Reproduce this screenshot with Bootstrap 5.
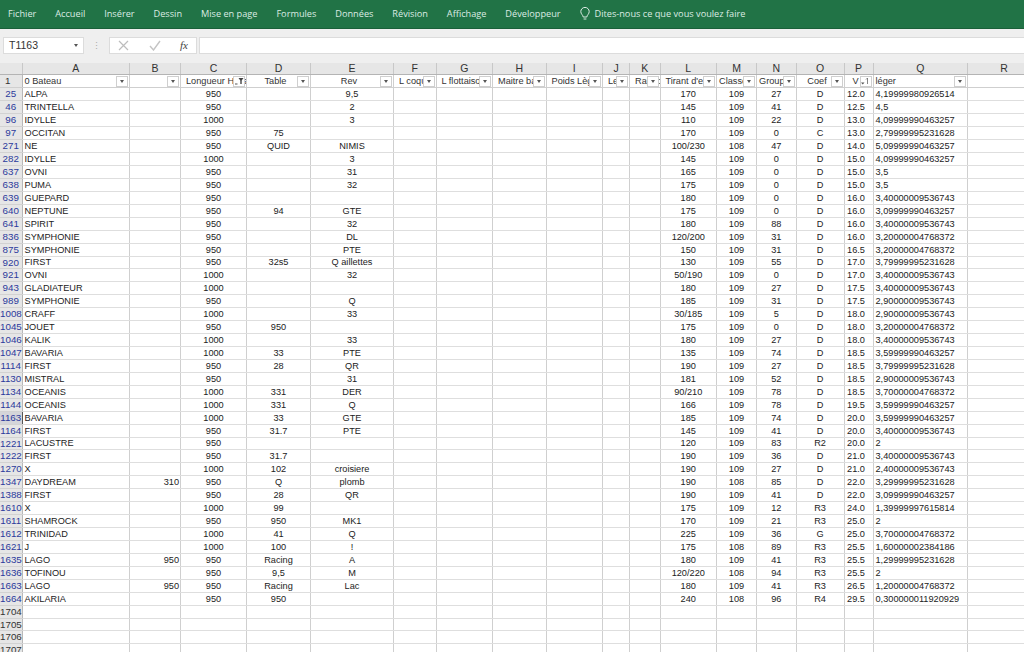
<!DOCTYPE html>
<html lang="fr">
<head>
<meta charset="utf-8">
<title>Classeur</title>
<link href="https://cdn.jsdelivr.net/npm/bootstrap@5.3.0/dist/css/bootstrap.min.css" rel="stylesheet">
<style>
html,body{height:100%;overflow:hidden;background:#fff}
body{font-family:"Liberation Sans",Arial,sans-serif;color:#222}
.tabbar{height:29px;background:#217346;border-bottom:1px solid #1a5f39;padding-left:8px;gap:18.9px;font-family:"Open Sans",sans-serif;font-size:9.2px;color:#dcebe3;white-space:nowrap}
.tabbar span{flex:none}
.tell{gap:3px;margin-left:1px}
.tell svg{margin-right:1px}
.fbar{height:34px;background:#efefef;padding:8px 0 9px 3px}
.namebox{width:81px;background:#fff;border:1px solid #dcdcdc;font-size:10.5px;color:#333;padding:0 5px}
.grip{width:25px;color:#aaa;font-size:9px;line-height:4px}
.fbtns{width:88px;background:#fff;border:1px solid #dcdcdc;padding:0 8px}
.fbtns svg{flex:none}
.fx{font-family:"Liberation Serif",serif;font-style:italic;font-size:11px;color:#444}
.finput{background:#fff;border:1px solid #dcdcdc;margin-left:2px;border-right:0}
.sheet{table-layout:fixed;width:1040px;border-collapse:collapse;margin:0;--bs-table-bg:transparent;--bs-table-color:#222}
.sheet col:nth-child(1){width:22px}.sheet col:nth-child(2){width:107.5px}.sheet col:nth-child(3){width:51px}.sheet col:nth-child(4){width:66px}.sheet col:nth-child(5){width:64px}.sheet col:nth-child(6){width:83px}.sheet col:nth-child(7){width:42.5px}.sheet col:nth-child(8){width:56.5px}.sheet col:nth-child(9){width:53.5px}.sheet col:nth-child(10){width:56.5px}.sheet col:nth-child(11){width:27px}.sheet col:nth-child(12){width:30.5px}.sheet col:nth-child(13){width:56.5px}.sheet col:nth-child(14){width:40px}.sheet col:nth-child(15){width:39.5px}.sheet col:nth-child(16){width:48px}.sheet col:nth-child(17){width:29px}.sheet col:nth-child(18){width:94.5px}.sheet col:nth-child(19){width:73px}
.sheet.table>:not(caption)>*>*{padding:0 1px;height:13px;line-height:12px;font-size:9.2px;font-weight:400;text-align:center;white-space:nowrap;overflow:hidden;border:0;border-right:1px solid #cfcfcf;border-bottom:1px solid #dedede;box-shadow:none;vertical-align:middle}
.sheet.table>tbody>tr:nth-child(14n)>*{height:12px;line-height:11px}
.sheet.table>thead>.letters>th{height:11px;line-height:10px;background:#e6e6e6;font-size:10.5px;color:#333;border-right:1px solid #c8c8c8;border-bottom:1px solid #b4b4b4}
.sheet.table>thead>.filters>th{height:13.5px;padding:0 2px 0 5px;position:relative;color:#333;border-bottom:1px solid #cfcfcf;text-align:left}
.sheet.table>thead>.filters>th.ctr{text-align:center;padding:0 8px 0 2px}
.sheet.table>thead>.filters>th.tight{padding-left:2px}
.sheet.table>*>*>th.rn{background:#e6e6e6;color:#2c3a9c;padding:0;border-right:1px solid #b8b8b8;border-bottom:1px solid #d2d2d2;font-size:9.8px}
.sheet.table>*>*>th.rn.plain{color:#333}
.sheet.table>*>*>th.rn.on{background:#d4d5da;color:#2c3a9c;border-right:1px solid #555}
.sheet.table>*>*>td.lt{text-align:left;padding-left:2px}
.sheet.table>*>*>td.rt{text-align:right;padding-right:1px}
.sheet.table>*>*>td.pv{padding-right:6px}
.sheet.table>*>*>.free{border-right-color:transparent}
.fbtn{position:absolute;right:1px;top:1px;width:12px;height:11px;background:#fff;border:1px solid #cfcfcf;display:flex;align-items:center;justify-content:center}
.tri{width:0;height:0;border-left:2.5px solid transparent;border-right:2.5px solid transparent;border-top:3px solid #555}
</style>
</head>
<body>
<div class="tabbar d-flex align-items-center">
<span>Fichier</span><span>Accueil</span><span>Insérer</span><span>Dessin</span><span>Mise en page</span><span>Formules</span><span>Données</span><span>Révision</span><span>Affichage</span><span>Développeur</span>
<span class="tell d-flex align-items-center"><svg width="10" height="14" viewBox="0 0 10 14" fill="none" stroke="#dcebe3" stroke-width="1"><path d="M3.2 10C3 8 .8 7 .8 4.6a4.2 4.2 0 0 1 8.4 0C9.200 7 7 8 6.800 10Z"/><path d="M3.600 12h2.800"/></svg>Dites-nous ce que vous voulez faire</span>
</div>
<div class="fbar d-flex">
<div class="namebox d-flex align-items-center justify-content-between"><span>T1163</span><span class="tri"></span></div>
<div class="grip d-flex align-items-center justify-content-center">⋮</div>
<div class="fbtns d-flex align-items-center justify-content-between">
<svg width="11" height="11" viewBox="0 0 11 11" stroke="#bdbdbd" stroke-width="1.200"><path d="M1 1l9 9M10 1l-9 9"/></svg>
<svg width="12" height="11" viewBox="0 0 12 11" fill="none" stroke="#c4c4c4" stroke-width="1.400"><path d="M1 6l3.500 4L11 1"/></svg>
<span class="fx">fx</span>
</div>
<div class="finput flex-grow-1"></div>
</div>
<table class="table sheet" id="sheet"><colgroup><col><col><col><col><col><col><col><col><col><col><col><col><col><col><col><col><col><col><col></colgroup><thead></thead><tbody></tbody></table>
<script src="https://cdn.jsdelivr.net/npm/bootstrap@5.3.0/dist/js/bootstrap.bundle.min.js"></script>
<script>
var rows=`25|ALPA||950||9,5|170|109|27|D|12.0|4,19999980926514
46|TRINTELLA||950||2|145|109|41|D|12.5|4,5
96|IDYLLE||1000||3|110|109|22|D|13.0|4,09999990463257
97|OCCITAN||950|75||170|109|0|C|13.0|2,79999995231628
271|NE||950|QUID|NIMIS|100/230|108|47|D|14.0|5,09999990463257
282|IDYLLE||1000||3|145|109|0|D|15.0|4,09999990463257
637|OVNI||950||31|165|109|0|D|15.0|3,5
638|PUMA||950||32|175|109|0|D|15.0|3,5
639|GUEPARD||950|||180|109|0|D|16.0|3,40000009536743
640|NEPTUNE||950|94|GTE|175|109|0|D|16.0|3,09999990463257
641|SPIRIT||950||32|180|109|88|D|16.0|3,40000009536743
836|SYMPHONIE||950||DL|120/200|109|31|D|16.0|3,20000004768372
875|SYMPHONIE||950||PTE|150|109|31|D|16.5|3,20000004768372
920|FIRST||950|32s5|Q aillettes|130|109|55|D|17.0|3,79999995231628
921|OVNI||1000||32|50/190|109|0|D|17.0|3,40000009536743
943|GLADIATEUR||1000|||180|109|27|D|17.5|3,40000009536743
989|SYMPHONIE||950||Q|185|109|31|D|17.5|2,90000009536743
1008|CRAFF||1000||33|30/185|109|5|D|18.0|2,90000009536743
1045|JOUET||950|950||175|109|0|D|18.0|3,20000004768372
1046|KALIK||1000||33|180|109|27|D|18.0|3,40000009536743
1047|BAVARIA||1000|33|PTE|135|109|74|D|18.5|3,59999990463257
1114|FIRST||950|28|QR|190|109|27|D|18.5|3,79999995231628
1130|MISTRAL||950||31|181|109|52|D|18.5|2,90000009536743
1134|OCEANIS||1000|331|DER|90/210|109|78|D|18.5|3,70000004768372
1144|OCEANIS||1000|331|Q|166|109|78|D|19.5|3,59999990463257
1163|BAVARIA||1000|33|GTE|185|109|74|D|20.0|3,59999990463257
1164|FIRST||950|31.7|PTE|145|109|41|D|20.0|3,40000009536743
1221|LACUSTRE||950|||120|109|83|R2|20.0|2
1222|FIRST||950|31.7||190|109|36|D|21.0|3,40000009536743
1270|X||1000|102|croisiere|190|109|27|D|21.0|2,40000009536743
1347|DAYDREAM|310|950|Q|plomb|190|108|85|D|22.0|3,29999995231628
1388|FIRST||950|28|QR|190|109|41|D|22.0|3,09999990463257
1610|X||1000|99||175|109|12|R3|24.0|1,39999997615814
1611|SHAMROCK||950|950|MK1|170|109|21|R3|25.0|2
1612|TRINIDAD||1000|41|Q|225|109|36|G|25.0|3,70000004768372
1621|J||1000|100|!|175|108|89|R3|25.5|1,60000002384186
1635|LAGO|950|950|Racing|A|180|109|41|R3|25.5|1,29999995231628
1636|TOFINOU||950|9,5|M|120/220|108|94|R3|25.5|2
1663|LAGO|950|950|Racing|Lac|180|109|41|R3|26.5|1,20000004768372
1664|AKILARIA||950|950||240|108|96|R4|29.5|0,300000011920929
1704|||||||||||
1705|||||||||||
1706|||||||||||
1707|||||||||||`.split('\n');
var t=document.getElementById('sheet');
var letters='ABCDEFGHIJKLMNOPQR'.split('');
var h='<tr class="letters"><th class="rn"></th>'+letters.map(function(l){return '<th>'+l+'</th>'}).join('')+'</tr>';
var tri='<span class="fbtn"><span class="tri"></span></span>';
var funnel='<span class="fbtn"><svg width="9" height="8" viewBox="0 0 9 8"><path d="M0 6.500h2.500v1H0z" fill="#555"/><path d="M3.500 1h5L6.700 3.500V7H5.300V3.500z" fill="#444"/></svg></span>';
var sortb='<span class="fbtn"><svg width="9" height="8" viewBox="0 0 9 8" fill="none"><path d="M0 5.500h3.500L1.750 7.500z" fill="#555"/><path d="M6.500 7V1M5 2.500L6.500 1" stroke="#666" stroke-width=".8"/></svg></span>';
var heads=[['0 Bateau','tight',tri],['','',tri],['Longueur Hors tout','',funnel],['Table','ctr',tri],['Rev','ctr',tri],['L coque','',tri],['L flottaison','',tri],['Maitre bau','',tri],['Poids Lège','',tri],['Lest','',tri],['Rapport','',tri],["Tirant d'eau",'',tri],['Classe','tight',tri],['Groupe','tight',tri],['Coef','ctr',tri],['V','ctr',sortb],['léger','tight',tri]];
h+='<tr class="filters"><th class="rn plain">1</th>'+heads.map(function(x){return '<th class="'+x[1]+'">'+x[0]+x[2]+'</th>'}).join('')+'<th class="free"></th></tr>';
t.tHead.innerHTML=h;
var b='';
rows.forEach(function(r){
 var c=r.split('|'),n=+c[0];
 var blank=n>=1704;
 var s='<tr><th class="rn'+(blank?' plain':'')+(n==1163?' on':'')+'">'+n+'</th>';
 s+='<td class="lt">'+c[1]+'</td><td class="rt">'+c[2]+'</td><td>'+c[3]+'</td><td>'+c[4]+'</td><td>'+c[5]+'</td>';
 for(var i=0;i<6;i++)s+='<td></td>';
 s+='<td>'+c[6]+'</td><td>'+c[7]+'</td><td>'+c[8]+'</td><td>'+c[9]+'</td><td class="pv">'+c[10]+'</td><td class="lt">'+c[11]+'</td><td class="free"></td></tr>';
 b+=s;
});
t.tBodies[0].innerHTML=b;
</script>
</body>
</html>
